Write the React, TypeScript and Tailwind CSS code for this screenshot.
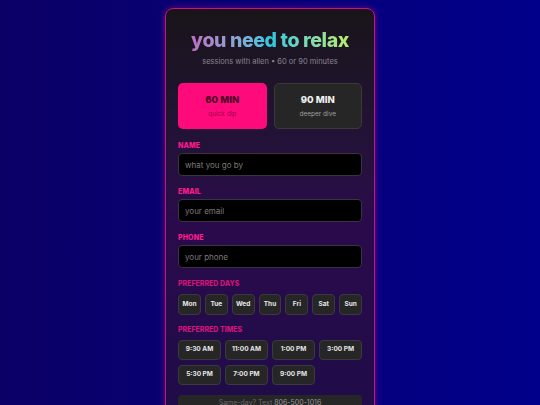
import React from "react";

const days = ["Mon", "Tue", "Wed", "Thu", "Fri", "Sat", "Sun"];
const times = ["9:30 AM", "11:00 AM", "1:00 PM", "3:00 PM", "5:30 PM", "7:00 PM", "9:00 PM"];

function Field({ label, placeholder }: { label: string; placeholder: string }) {
  return (
    <div className="flex flex-col gap-[3px]">
      <div className="text-[7px] font-extrabold uppercase tracking-[0.02em] text-[#ff1a8c] leading-[9px]">{label}</div>
      <div className="h-[23px] rounded-[4px] border border-[#3a3340] bg-black px-[6px] flex items-center text-[8px] text-[#7a7a7a]">
        {placeholder}
      </div>
    </div>
  );
}

export default function App() {
  return (
    <div
      className="w-[540px] h-[405px] overflow-hidden bg-gradient-to-r from-[#0b0066] to-[#00008a] flex justify-center pt-[8px]"
      style={{ fontFamily: "Inter, 'Noto Sans', sans-serif" }}
    >
      <div className="w-[210px] h-[430px] rounded-[8px] border border-[#c0187f] shadow-[0_0_6px_rgba(255,0,140,0.45)] bg-gradient-to-b from-[#191419] via-[#2b0a4c] to-[#1d0c48] px-[12px] pt-[19px] flex flex-col">
        <div className="text-center text-[19.5px] font-extrabold tracking-[-0.02em] leading-[24px] bg-gradient-to-r from-[#c35cc0] via-[#28c8e0] to-[#c8f040] bg-clip-text text-transparent">
          you need to relax
        </div>
        <div className="text-center text-[7.5px] text-[#8a8490] mt-[5px] leading-[10px]">
          sessions with allen • 60 or 90 minutes
        </div>

        <div className="grid grid-cols-2 gap-[7px] mt-[16px]">
          <div className="h-[46px] rounded-[5px] bg-[#ff0a7a] flex flex-col items-center justify-center gap-[5px]">
            <div className="text-[9.5px] font-extrabold text-[#4a0026] leading-[11px]">60 MIN</div>
            <div className="text-[6.5px] text-[#a8004f] leading-[8px]">quick dip</div>
          </div>
          <div className="h-[46px] rounded-[5px] bg-[#262626] border border-[#3a3a3a] flex flex-col items-center justify-center gap-[5px]">
            <div className="text-[9.5px] font-extrabold text-[#f0f0f0] leading-[11px]">90 MIN</div>
            <div className="text-[6.5px] text-[#a0a0a0] leading-[8px]">deeper dive</div>
          </div>
        </div>

        <div className="flex flex-col gap-[11px] mt-[12px]">
          <Field label="Name" placeholder="what you go by" />
          <Field label="Email" placeholder="your email" />
          <Field label="Phone" placeholder="your phone" />
        </div>

        <div className="mt-[11px] text-[7px] font-extrabold uppercase text-[#d0147a] leading-[9px]">Preferred Days</div>
        <div className="grid grid-cols-7 gap-[4px] mt-[6px]">
          {days.map((d) => (
            <div key={d} className="h-[21px] rounded-[4px] bg-[#262626] border border-[#3a3a3a] flex items-center justify-center text-[6.5px] font-bold text-[#e8e8e8]">
              {d}
            </div>
          ))}
        </div>

        <div className="mt-[10px] text-[7px] font-extrabold uppercase text-[#d0147a] leading-[9px]">Preferred Times</div>
        <div className="grid grid-cols-4 gap-x-[4px] gap-y-[5px] mt-[6px]">
          {times.map((t) => (
            <div key={t} className="h-[20px] rounded-[4px] bg-[#262626] border border-[#3a3a3a] flex items-center justify-center text-[6.5px] font-bold text-[#e8e8e8]">
              {t}
            </div>
          ))}
        </div>

        <div className="mt-[10px] h-[30px] rounded-[4px] bg-[#262626] flex items-start justify-center pt-[3px] text-[7px] leading-[9px] text-[#6a6a6a]">
          <span>Same-day? Text <span className="text-[#9a9a9a]">806-500-1016</span></span>
        </div>
      </div>
    </div>
  );
}
